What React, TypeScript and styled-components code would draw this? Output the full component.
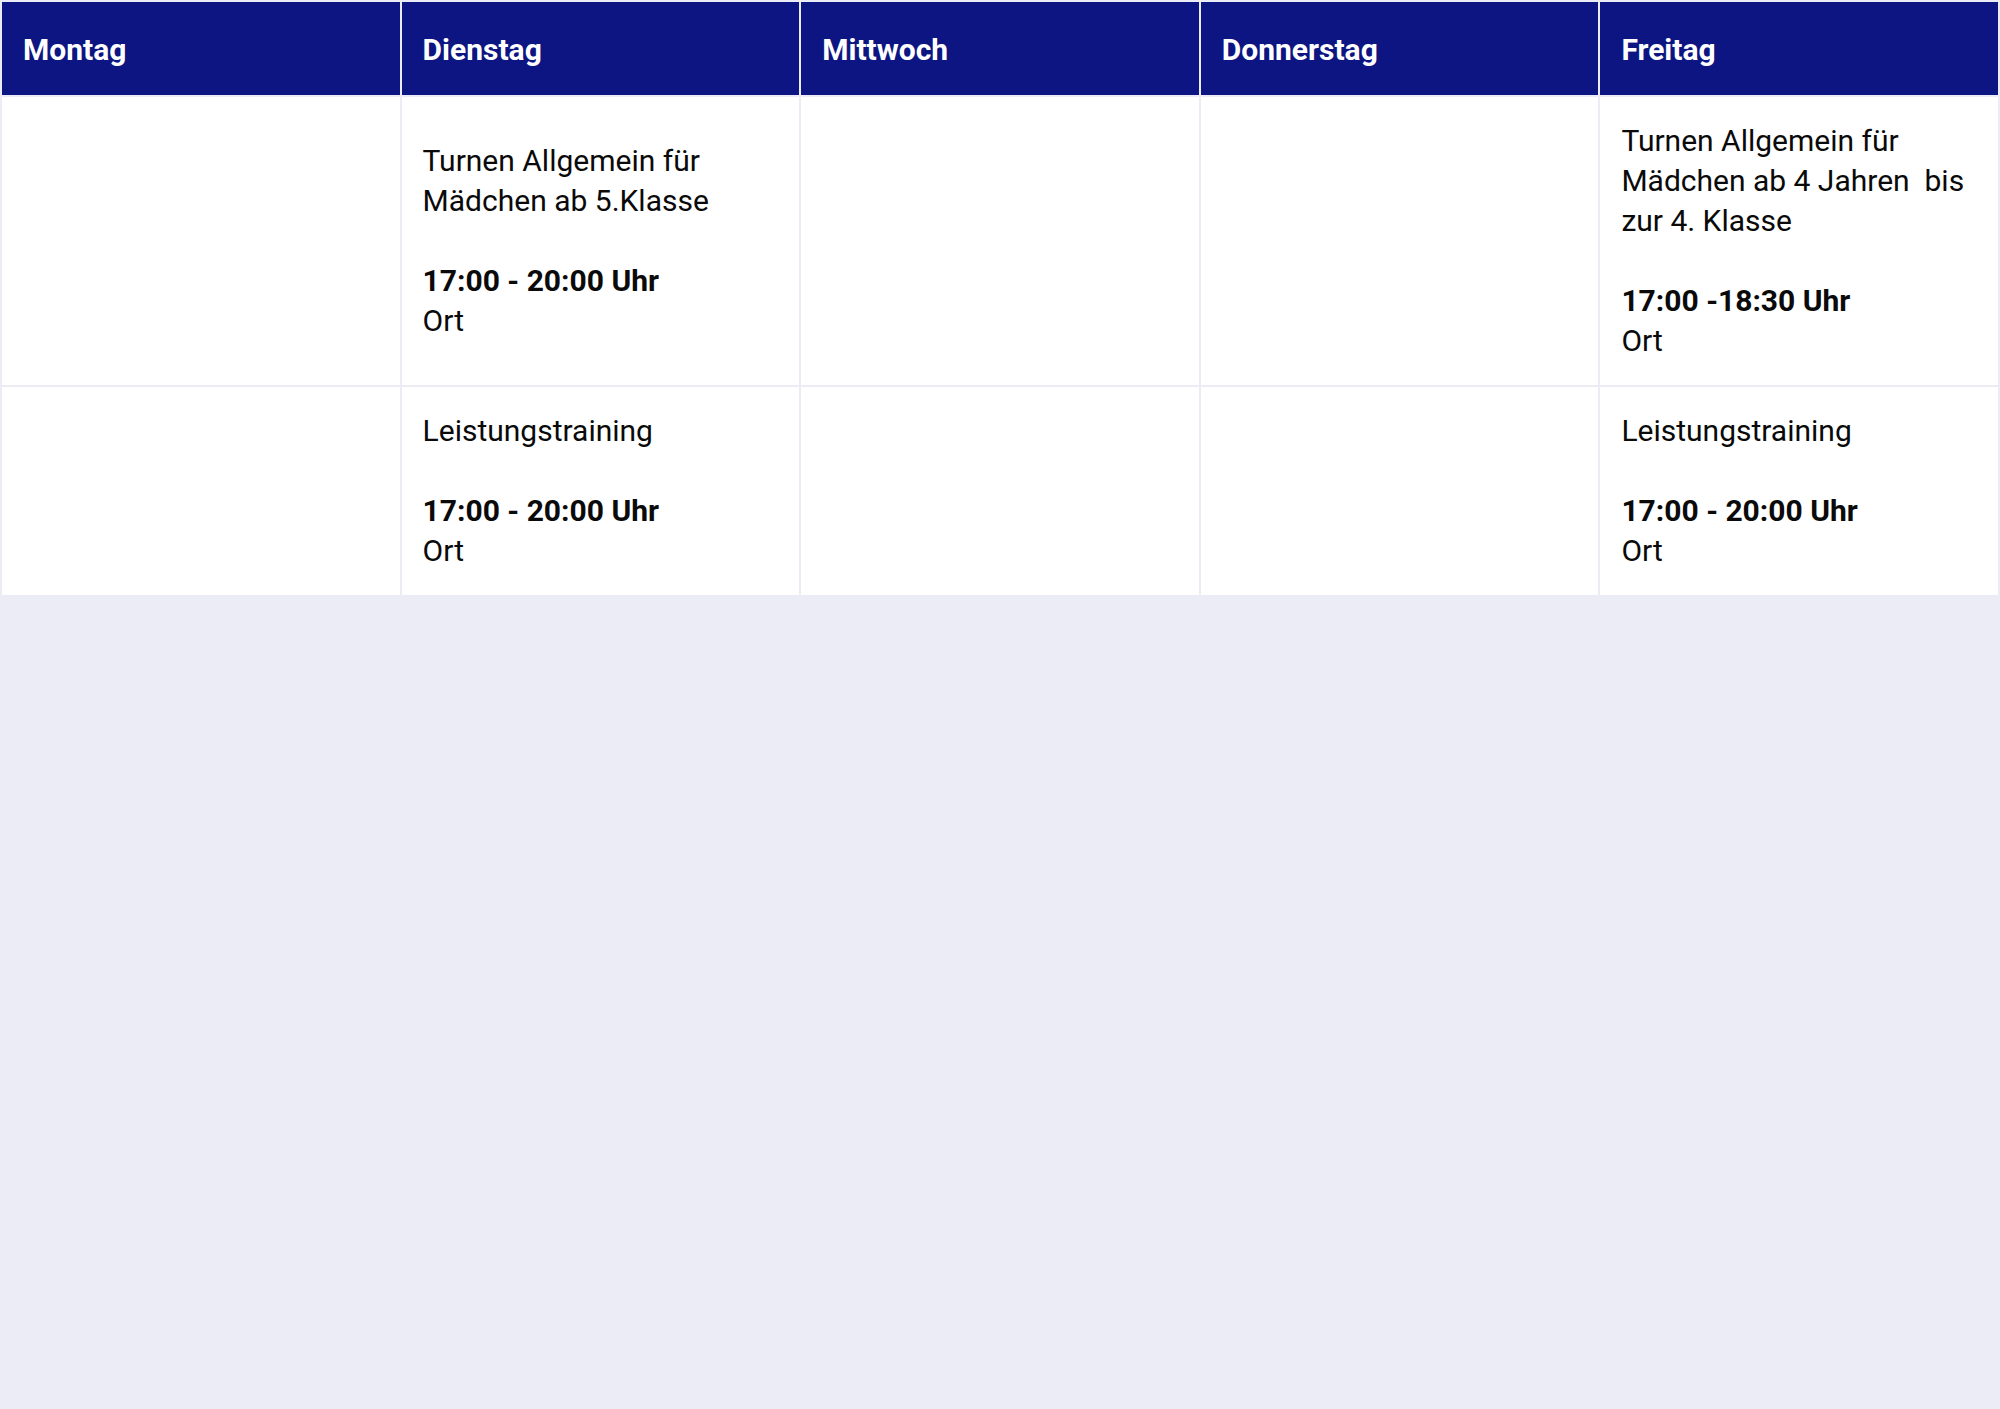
import styled, { createGlobalStyle } from "styled-components";

const GlobalStyle = createGlobalStyle`
  html, body {
    margin: 0;
    padding: 0;
    background: #ececf6;
    font-family: Roboto, "Liberation Sans", sans-serif;
  }
  #root {
    min-height: 100vh;
  }
`;

const Table = styled.table`
  width: 100%;
  table-layout: fixed;
  border-collapse: separate;
  border-spacing: 2px;
  background: #ececf6;
`;

const HeadCell = styled.th`
  background: #0c1581;
  color: #ffffff;
  font-size: 30px;
  font-weight: 700;
  line-height: 45px;
  text-align: left;
  padding: 25px 21px 23px;
`;

const Cell = styled.td`
  background: #ffffff;
  color: #0a0a0a;
  font-size: 30px;
  line-height: 40px;
  vertical-align: middle;
  padding: 24px 21px;
`;

const Title = styled.div`
  margin-bottom: 40px;
`;

const Time = styled.div`
  font-weight: 700;
`;

interface Course {
  title: string;
  time: string;
  place: string;
}

const days = ["Montag", "Dienstag", "Mittwoch", "Donnerstag", "Freitag"];

const rows: (Course | null)[][] = [
  [
    null,
    { title: "Turnen Allgemein für Mädchen ab 5.Klasse", time: "17:00 - 20:00 Uhr", place: "Ort" },
    null,
    null,
    {
      title: "Turnen Allgemein für Mädchen ab 4 Jahren\u00a0 bis zur 4. Klasse",
      time: "17:00 -18:30 Uhr",
      place: "Ort",
    },
  ],
  [
    null,
    { title: "Leistungstraining", time: "17:00 - 20:00 Uhr", place: "Ort" },
    null,
    null,
    { title: "Leistungstraining", time: "17:00 - 20:00 Uhr", place: "Ort" },
  ],
];

function App() {
  return (
    <>
      <GlobalStyle />
      <Table>
        <thead>
          <tr>
            {days.map((d) => (
              <HeadCell key={d}>{d}</HeadCell>
            ))}
          </tr>
        </thead>
        <tbody>
          {rows.map((row, i) => (
            <tr key={i}>
              {row.map((c, j) => (
                <Cell key={j}>
                  {c && (
                    <>
                      <Title>{c.title}</Title>
                      <Time>{c.time}</Time>
                      <div>{c.place}</div>
                    </>
                  )}
                </Cell>
              ))}
            </tr>
          ))}
        </tbody>
      </Table>
    </>
  );
}

export default App;
